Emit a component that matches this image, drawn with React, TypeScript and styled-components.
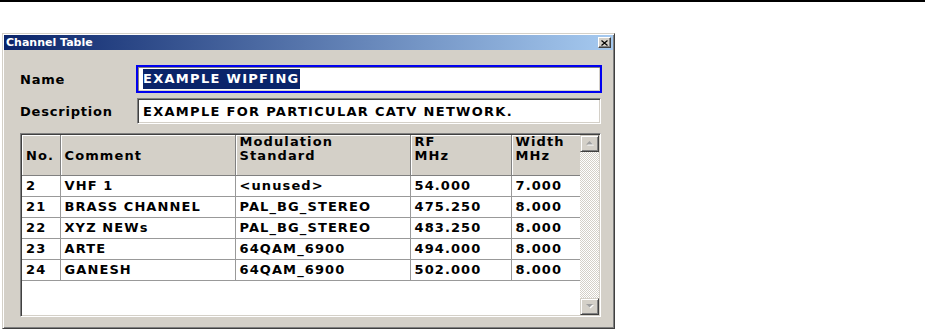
import React from 'react';
import styled, { createGlobalStyle } from 'styled-components';

const GlobalStyle = createGlobalStyle`
  html, body { margin: 0; padding: 0; background: #fff; }
  body { font-family: "DejaVu Sans", Verdana, sans-serif; }
`;

const Page = styled.div`
  width: 925px;
  height: 329px;
  overflow: hidden;
  display: flex;
  flex-direction: column;
`;

const TopRule = styled.div`
  height: 2px;
  background: #000;
`;

const Window = styled.section`
  margin: 31px 0 0 2px;
  width: 613px;
  height: 296px;
  box-sizing: border-box;
  background: #d4d0c8;
  border: 1px solid;
  border-color: #d4d0c8 #404040 #404040 #d4d0c8;
  box-shadow: inset 1px 1px #fff, inset -1px -1px #808080;
  padding: 1px;
  display: flex;
  flex-direction: column;
`;

const TitleBar = styled.header`
  height: 15px;
  display: flex;
  align-items: center;
  justify-content: space-between;
  padding: 0 2px;
  background: linear-gradient(to right, #0a246a, #a6caf0);
  color: #fff;
  font: bold 11px "DejaVu Sans", Verdana, sans-serif;
`;

const CloseButton = styled.button`
  width: 13px;
  height: 11px;
  padding: 0;
  margin: 0;
  display: flex;
  align-items: center;
  justify-content: center;
  background: #d4d0c8;
  border: 1px solid;
  border-color: #fff #404040 #404040 #fff;
  box-shadow: inset -1px -1px #808080;
`;

const Body = styled.div`
  flex: 1;
  display: flex;
  flex-direction: column;
  padding: 15px 12px 0 16px;
`;

const Fields = styled.div`
  display: grid;
  grid-template-columns: 117px 1fr;
  row-gap: 5px;
  align-items: center;
`;

const Label = styled.label`
  font-size: 13px;
  font-weight: bold;
  letter-spacing: 0.8px;
  color: #000;
`;

const TextBox = styled.div<{ $focused?: boolean }>`
  box-sizing: border-box;
  height: ${p => (p.$focused ? 28 : 26)}px;
  margin: 0 ${p => (p.$focused ? -1 : 0)}px 0 ${p => (p.$focused ? -1 : 0)}px;
  background: #fff;
  border: ${p => (p.$focused ? '2px solid #0000f0' : '1px solid')};
  border-color: ${p => (p.$focused ? '#0000f0' : '#808080 #fff #fff #808080')};
  box-shadow: ${p => (p.$focused ? 'inset 1px 1px #808080, inset -1px -1px #d4d0c8' : 'inset 1px 1px #404040, inset -1px -1px #d4d0c8')};
  display: flex;
  align-items: center;
  padding-left: 5px;
  font-size: 13px;
  font-weight: bold;
  letter-spacing: 1.3px;
  color: #000;
  white-space: nowrap;
`;

const Selection = styled.span`
  background: #0a246a;
  color: #fff;
  line-height: 20px;
`;

const TableFrame = styled.div`
  margin-top: 9px;
  height: 184px;
  box-sizing: border-box;
  border: 1px solid;
  border-color: #808080 #fff #fff #808080;
  padding: 1px;
  box-shadow: inset 1px 1px #404040, inset -1px -1px #d4d0c8;
  display: grid;
  grid-template-columns: 1fr 19px;
`;

const TableArea = styled.div`
  background: #fff;
  overflow: hidden;
`;

const Grid = styled.table`
  width: 558px;
  table-layout: fixed;
  border-collapse: collapse;
  font-size: 13px;
  font-weight: bold;
  letter-spacing: 1.1px;
  color: #000;
`;

const HeadCell = styled.th<{ $w: number }>`
  width: ${p => p.$w}px;
  height: 40px;
  box-sizing: border-box;
  padding: 0 4px;
  text-align: left;
  vertical-align: top;
  font-weight: bold;
  line-height: 14px;
  background: #d4d0c8;
  border-right: 1px solid #808080;
  border-bottom: 1px solid #808080;
  box-shadow: inset 1px 1px #fff;
  white-space: pre;
`;

const Cell = styled.td`
  height: 21px;
  box-sizing: border-box;
  padding: 0 4px;
  border-right: 1px solid #999;
  border-bottom: 1px solid #999;
  white-space: nowrap;
`;

const ScrollBar = styled.div`
  display: flex;
  flex-direction: column;
  background-color: #fff;
  background-image: conic-gradient(#d4d0c8 25%, #fff 0 50%, #d4d0c8 0 75%, #fff 0);
  background-size: 2px 2px;
`;

const ScrollTrack = styled.div`
  flex: 1;
`;

const ArrowButton = styled.div`
  height: 17px;
  box-sizing: border-box;
  background: #d4d0c8;
  border: 1px solid;
  border-color: #d4d0c8 #404040 #404040 #d4d0c8;
  box-shadow: inset 1px 1px #fff, inset -1px -1px #808080;
  display: flex;
  align-items: center;
  justify-content: center;
`;

const Arrow: React.FC<{ down?: boolean }> = ({ down }) => (
  <svg width="8" height="5" viewBox="0 0 8 5">
    {down ? (
      <>
        <path d="M1 1h7l-3.5 3.5z" fill="#fff" />
        <path d="M0 0h7l-3.5 3.5z" fill="#a0a0a0" />
      </>
    ) : (
      <>
        <path d="M1 4.5h7l-3.5-3.5z" fill="#fff" />
        <path d="M0 3.5h7L3.5 0z" fill="#a0a0a0" />
      </>
    )}
  </svg>
);

const columns = [
  { title: '\nNo.', w: 38 },
  { title: '\nComment', w: 175 },
  { title: 'Modulation\nStandard', w: 175 },
  { title: 'RF\nMHz', w: 101 },
  { title: 'Width\nMHz', w: 69 },
];

const rows = [
  ['2', 'VHF 1', '<unused>', '54.000', '7.000'],
  ['21', 'BRASS CHANNEL', 'PAL_BG_STEREO', '475.250', '8.000'],
  ['22', 'XYZ NEWs', 'PAL_BG_STEREO', '483.250', '8.000'],
  ['23', 'ARTE', '64QAM_6900', '494.000', '8.000'],
  ['24', 'GANESH', '64QAM_6900', '502.000', '8.000'],
];

export default function App() {
  return (
    <Page>
      <GlobalStyle />
      <TopRule />
      <Window>
        <TitleBar>
          <span>Channel Table</span>
          <CloseButton aria-label="Close">
            <svg width="7" height="6" viewBox="0 0 7 6">
              <path d="M0.5 0.5l6 5M6.5 0.5l-6 5" stroke="#000" strokeWidth="1.2" />
            </svg>
          </CloseButton>
        </TitleBar>
        <Body>
          <Fields>
            <Label>Name</Label>
            <TextBox $focused>
              <Selection>EXAMPLE WIPFING</Selection>
            </TextBox>
            <Label>Description</Label>
            <TextBox>EXAMPLE FOR PARTICULAR CATV NETWORK.</TextBox>
          </Fields>
          <TableFrame>
            <TableArea>
              <Grid>
                <thead>
                  <tr>
                    {columns.map(c => (
                      <HeadCell key={c.title} $w={c.w}>{c.title}</HeadCell>
                    ))}
                  </tr>
                </thead>
                <tbody>
                  {rows.map(r => (
                    <tr key={r[0]}>
                      {r.map((v, i) => (
                        <Cell key={i}>{v}</Cell>
                      ))}
                    </tr>
                  ))}
                </tbody>
              </Grid>
            </TableArea>
            <ScrollBar>
              <ArrowButton><Arrow /></ArrowButton>
              <ScrollTrack />
              <ArrowButton><Arrow down /></ArrowButton>
            </ScrollBar>
          </TableFrame>
        </Body>
      </Window>
    </Page>
  );
}
